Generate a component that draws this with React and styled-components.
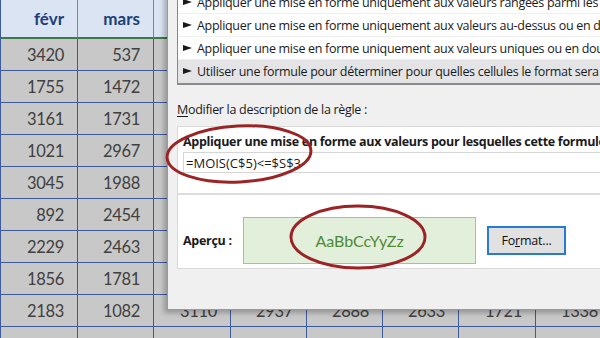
import React from 'react';
import styled, { createGlobalStyle } from 'styled-components';

const GlobalStyle = createGlobalStyle`
  html, body {
    margin: 0;
    padding: 0;
    background: #ffffff;
  }
  * {
    box-sizing: border-box;
  }
`;

const Page = styled.div`
  position: relative;
  width: 600px;
  height: 338px;
  overflow: hidden;
  background: #c8c8c8;
`;

const Sheet = styled.div`
  display: grid;
  grid-template-columns: 77px 76px 77px 76px 76px 76px 77px 76px;
  grid-template-rows: 39px repeat(10, 32px);
  border-left: 1px solid #3d5a99;
  font-family: Lato, 'Liberation Sans', sans-serif;
`;

const HeadCell = styled.div`
  display: flex;
  align-items: center;
  justify-content: flex-end;
  padding-right: 13px;
  background: #dae4f2;
  border-right: 1px solid #6f86b8;
  border-bottom: 2px solid #3b7a4a;
  color: #1c3f7c;
  font-weight: 700;
  font-size: 17px;
`;

const Cell = styled.div`
  display: flex;
  align-items: center;
  justify-content: flex-end;
  padding-right: 13px;
  background: #c8c8c8;
  border-right: 1px solid #3d5a99;
  border-bottom: 1px solid #3d5a99;
  color: #404040;
  font-size: 16.5px;
  letter-spacing: -0.3px;
`;

const Dialog = styled.div`
  position: absolute;
  left: 167px;
  top: -9px;
  width: 460px;
  height: 319px;
  background: #f0f0f0;
  border-left: 1px solid #9a9a9a;
  border-bottom: 1px solid #9a9a9a;
  box-shadow: -3px 3px 5px rgba(0, 0, 0, 0.25);
  padding: 0 0 0 9px;
  font-family: 'Open Sans', 'Noto Sans', sans-serif;
  font-size: 12.5px;
  letter-spacing: -0.3px;
  color: #1a1a1a;
  display: flex;
  flex-direction: column;
`;

const RuleList = styled.div`
  background: #ffffff;
  border: 1px solid #828790;
  border-top: none;
  border-bottom: 2px solid #8a8a8a;
  display: flex;
  flex-direction: column;
`;

const RuleItem = styled.div`
  display: flex;
  align-items: center;
  height: 23px;
  padding-left: 5px;
  white-space: nowrap;
  background: ${(p) => (p.$selected ? '#e4e4e6' : '#ffffff')};
  border-bottom: 1px solid ${(p) => (p.$selected ? '#e4e4e6' : '#f0f0f0')};
`;

const Arrow = styled.span`
  flex: none;
  width: 0;
  height: 0;
  margin-right: 5px;
  border-left: 9px solid #1a1a1a;
  border-top: 3.5px solid transparent;
  border-bottom: 3.5px solid transparent;
`;

const SectionLabel = styled.div`
  margin-top: 14px;
  height: 22px;
  line-height: 22px;
  white-space: nowrap;

  u {
    text-decoration-thickness: 1px;
    text-underline-offset: 2px;
  }
`;

const GroupBox = styled.div`
  background: #ffffff;
  border: 1px solid #d9d9d9;
  border-right: none;
  margin-top: 5px;
  display: flex;
  flex-direction: column;
`;

const FormulaPart = styled.div`
  padding: 6px 0 20px 5px;
  border-bottom: 2px solid #dcdcdc;
`;

const BoldLine = styled.div`
  font-weight: 700;
  white-space: nowrap;
  height: 18px;
  line-height: 18px;
`;

const FormulaInput = styled.div`
  margin-top: 1px;
  height: 21px;
  border-top: 1px solid #d6d6d6;
  border-bottom: 1px solid #d6d6d6;
  border-left: 1px solid #d6d6d6;
  display: flex;
  align-items: center;
  padding-left: 2px;
  font-size: 13px;
  letter-spacing: 0;
  white-space: nowrap;
`;

const PreviewPart = styled.div`
  display: flex;
  align-items: center;
  padding: 22px 0 4px 5px;
`;

const PreviewLabel = styled.div`
  font-weight: 700;
  width: 60px;
`;

const PreviewBox = styled.div`
  width: 233px;
  height: 47px;
  background: #e2efda;
  border: 1px solid #b4b4b4;
  display: flex;
  align-items: center;
  justify-content: center;
  color: #4f8a33;
  font-family: Lato, 'Liberation Sans', sans-serif;
  font-size: 16px;
  letter-spacing: 0;
`;

const FormatButton = styled.button`
  margin-left: 11px;
  width: 79px;
  height: 29px;
  background: #e1e1e1;
  border: 2px solid #2a7ad2;
  font-family: inherit;
  font-size: 12.5px;
  letter-spacing: -0.2px;
  color: #111;
  padding: 0;

  u {
    text-decoration-thickness: 1px;
  }
`;

const Marks = styled.svg`
  position: absolute;
  left: 0;
  top: 0;
  pointer-events: none;
`;

const heads = ['févr', 'mars', 'avr', 'mai', 'juin', 'juil', 'août', 'sept'];

const rows = [
  [3420, 537, 2811, 1960, 2410, 1290, 3001, 1774],
  [1755, 1472, 2204, 3127, 1845, 2660, 1402, 2519],
  [3161, 1731, 1893, 2401, 3330, 1184, 2745, 1963],
  [1021, 2967, 3012, 1540, 2276, 3105, 1879, 2208],
  [3045, 1988, 1420, 2853, 1609, 2477, 3210, 1536],
  [892, 2454, 2637, 1908, 3044, 1723, 2190, 2985],
  [2229, 2463, 1756, 2391, 1587, 2934, 1662, 2417],
  [1856, 1781, 2980, 1365, 2703, 1891, 2526, 1740],
  [2183, 1082, 3110, 2937, 2888, 2633, 1721, 1338],
  ['', '', '', '', '', '', '', ''],
];

const rules = [
  'Appliquer une mise en forme uniquement aux valeurs rangées parmi les premières ou les dernières valeurs',
  'Appliquer une mise en forme uniquement aux valeurs au-dessus ou en dessous de la moyenne',
  'Appliquer une mise en forme uniquement aux valeurs uniques ou en double',
  'Utiliser une formule pour déterminer pour quelles cellules le format sera appliqué',
];

const App = () => (
  <Page>
    <GlobalStyle />
    <Sheet>
      {heads.map((h) => (
        <HeadCell key={h}>{h}</HeadCell>
      ))}
      {rows.map((r, i) =>
        r.map((v, j) => <Cell key={`${i}-${j}`}>{v}</Cell>)
      )}
    </Sheet>

    <Dialog>
      <RuleList>
        {rules.map((t, i) => (
          <RuleItem key={t} $selected={i === 3}>
            <Arrow />
            {t}
          </RuleItem>
        ))}
      </RuleList>

      <SectionLabel>
        <u>M</u>odifier la description de la règle :
      </SectionLabel>

      <GroupBox>
        <FormulaPart>
          <BoldLine>
            Appliquer une mise en forme aux valeurs pour lesquelles cette formule est vraie :
          </BoldLine>
          <FormulaInput>=MOIS(C$5)&lt;=$S$3</FormulaInput>
        </FormulaPart>
        <PreviewPart>
          <PreviewLabel>Aperçu :</PreviewLabel>
          <PreviewBox>AaBbCcYyZz</PreviewBox>
          <FormatButton>
            Fo<u>r</u>mat...
          </FormatButton>
        </PreviewPart>
      </GroupBox>
    </Dialog>

    <Marks width="600" height="338" viewBox="0 0 600 338">
      <ellipse cx="239" cy="154" rx="72" ry="28" fill="none" stroke="#9b2326" strokeWidth="3" transform="rotate(-3 239 154)" />
      <ellipse cx="358" cy="237" rx="67" ry="31" fill="none" stroke="#9b2326" strokeWidth="3" />
    </Marks>
  </Page>
);

export default App;
